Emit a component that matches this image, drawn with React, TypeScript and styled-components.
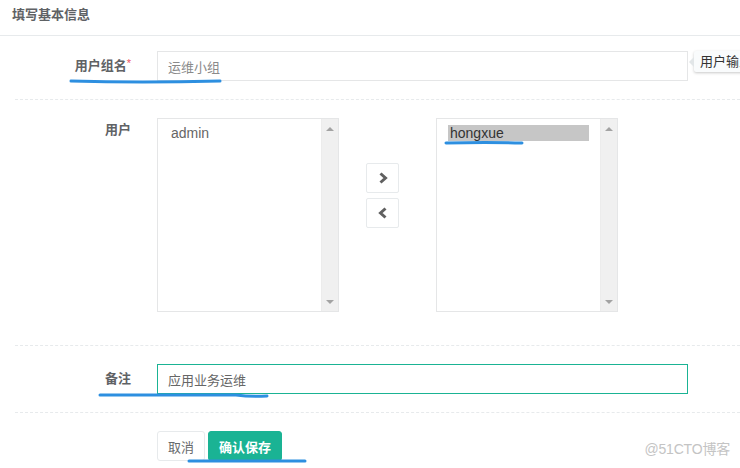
import React from 'react';
import styled, { createGlobalStyle } from 'styled-components';

const GlobalStyle = createGlobalStyle`
  html, body {
    margin: 0;
    padding: 0;
    background: #fff;
  }
  body {
    font-family: "Liberation Sans", "Noto Sans CJK SC", sans-serif;
    font-size: 13px;
    color: #676a6c;
  }
`;

const Page = styled.div`
  position: relative;
  width: 740px;
  height: 468px;
  overflow: hidden;
  background: #fff;
`;

const Header = styled.div`
  height: 36px;
  box-sizing: border-box;
  padding: 6px 12px 0;
  border-bottom: 1px solid #e7eaec;
`;

const Title = styled.h5`
  margin: 0;
  font-size: 13px;
  line-height: 18px;
  font-weight: bold;
  color: #5f6265;
`;

const Form = styled.div`
  padding: 15px 0 0 15px;
`;

const Row = styled.div<{ $top?: boolean; $pad?: number }>`
  display: flex;
  align-items: ${p => (p.$top ? 'flex-start' : 'center')};
  padding-bottom: ${p => p.$pad || 0}px;
`;

const Label = styled.label`
  flex-shrink: 0;
  width: 116px;
  margin-right: 26px;
  text-align: right;
  font-weight: bold;
  line-height: 24px;
  color: #5f6265;
`;

const Req = styled.span`
  color: #ed5565;
  font-weight: normal;
  font-size: 11px;
  position: relative;
  top: -3px;
`;

const TextInput = styled.input<{ $focus?: boolean }>`
  width: 531px;
  height: 30px;
  box-sizing: border-box;
  margin: 0;
  padding: 0 10px;
  border: 1px solid ${p => (p.$focus ? '#1ab394' : '#e5e6e7')};
  border-radius: 0;
  outline: none;
  background: #fff;
  font-family: inherit;
  font-size: 13px;
  color: ${p => (p.$focus ? '#666' : '#8a8a8a')};
`;

const Divider = styled.div`
  height: 0;
  border-top: 1px dashed #e7eaec;
  margin: 18px 0;
`;

const Transfer = styled.div`
  display: flex;
`;

const ListBox = styled.div`
  width: 182px;
  height: 194px;
  box-sizing: border-box;
  border: 1px solid #e5e6e7;
  display: flex;
`;

const Options = styled.div`
  flex: 1;
  padding: 6px 11px;
`;

const Option = styled.div<{ $selected?: boolean }>`
  height: 16px;
  line-height: 16px;
  padding-left: 2px;
  font-size: 14px;
  color: ${p => (p.$selected ? '#333' : '#666')};
  background: ${p => (p.$selected ? '#c6c6c6' : 'transparent')};
`;

const ScrollTrack = styled.div`
  width: 17px;
  background: #f0f0f0;
  border-left: 1px solid #ececec;
  box-sizing: border-box;
  display: flex;
  flex-direction: column;
  align-items: center;
  justify-content: space-between;
  padding: 8px 0 7px;
`;

const ScrollArrow = styled.div<{ $down?: boolean }>`
  width: 0;
  height: 0;
  border-left: 4px solid transparent;
  border-right: 4px solid transparent;
  ${p =>
    p.$down
      ? 'border-top: 4px solid #a3a3a3;'
      : 'border-bottom: 4px solid #a3a3a3;'}
`;

const Arrows = styled.div`
  width: 97px;
  box-sizing: border-box;
  padding: 45px 0 0 27px;
  display: flex;
  flex-direction: column;
  gap: 5px;
`;

const ArrowBtn = styled.button`
  width: 33px;
  height: 30px;
  box-sizing: border-box;
  padding: 0;
  border: 1px solid #e7eaec;
  border-radius: 2px;
  background: #fff;
  display: flex;
  align-items: center;
  justify-content: center;
`;

const Actions = styled.div`
  display: flex;
  gap: 3px;
  margin-left: 142px;
`;

const Btn = styled.button<{ $primary?: boolean }>`
  height: 30px;
  box-sizing: border-box;
  padding: 0 10px;
  border: 1px solid ${p => (p.$primary ? '#1ab394' : '#e7eaec')};
  border-radius: 3px;
  background: ${p => (p.$primary ? '#1ab394' : '#fff')};
  color: ${p => (p.$primary ? '#fff' : '#676a6c')};
  font-family: inherit;
  font-size: 13px;
  font-weight: ${p => (p.$primary ? 'bold' : 'normal')};
`;

const Tooltip = styled.div`
  position: absolute;
  left: 694px;
  top: 51px;
  height: 21px;
  padding: 0 8px 0 6px;
  background: #f9fbfc;
  border-radius: 2px;
  box-shadow: 0 1px 3px rgba(0, 0, 0, 0.22);
  font-size: 13px;
  line-height: 21px;
  color: #333;
  white-space: nowrap;
  &::before {
    content: '';
    position: absolute;
    left: -5px;
    top: 6px;
    border-top: 5px solid transparent;
    border-bottom: 5px solid transparent;
    border-right: 5px solid #e2e6e8;
  }
`;

const Scribbles = styled.svg`
  position: absolute;
  left: 0;
  top: 0;
  pointer-events: none;
`;

const Watermark = styled.div`
  position: absolute;
  right: 10px;
  bottom: 10px;
  font-size: 14px;
  color: #c4c4c4;
  letter-spacing: -0.2px;
`;

const Chevron = ({ left }: { left?: boolean }) => (
  <svg width="12" height="14" viewBox="0 0 12 14">
    <path
      d={left ? 'M8.5 2.5 L3.5 7 L8.5 11.5' : 'M3.5 2.5 L8.5 7 L3.5 11.5'}
      fill="none"
      stroke="#606060"
      strokeWidth="3"
    />
  </svg>
);

const Scroll = () => (
  <ScrollTrack>
    <ScrollArrow />
    <ScrollArrow $down />
  </ScrollTrack>
);

export default function App() {
  return (
    <Page>
      <GlobalStyle />
      <Header>
        <Title>填写基本信息</Title>
      </Header>
      <Form>
        <Row>
          <Label>
            用户组名<Req>*</Req>
          </Label>
          <TextInput readOnly value="运维小组" />
        </Row>
        <Divider />
        <Row $top $pad={15}>
          <Label>用户</Label>
          <Transfer>
            <ListBox>
              <Options>
                <Option>admin</Option>
              </Options>
              <Scroll />
            </ListBox>
            <Arrows>
              <ArrowBtn>
                <Chevron />
              </ArrowBtn>
              <ArrowBtn>
                <Chevron left />
              </ArrowBtn>
            </Arrows>
            <ListBox>
              <Options>
                <Option $selected>hongxue</Option>
              </Options>
              <Scroll />
            </ListBox>
          </Transfer>
        </Row>
        <Divider />
        <Row>
          <Label>备注</Label>
          <TextInput $focus readOnly value="应用业务运维" />
        </Row>
        <Divider />
        <Actions>
          <Btn>取消</Btn>
          <Btn $primary>确认保存</Btn>
        </Actions>
      </Form>

      <Tooltip>用户输入</Tooltip>

      <Scribbles width="740" height="468">
        <g fill="none" stroke="#2d8fe0" strokeWidth="3" strokeLinecap="round">
          <path d="M71 81 Q140 83 220 81" />
          <path d="M446 143 Q485 142 522 143" />
          <path d="M100 395 L236 395 Q250 397 267 396" />
          <path d="M189 461 L305 461" />
        </g>
      </Scribbles>

      <Watermark>@51CTO博客</Watermark>
    </Page>
  );
}
